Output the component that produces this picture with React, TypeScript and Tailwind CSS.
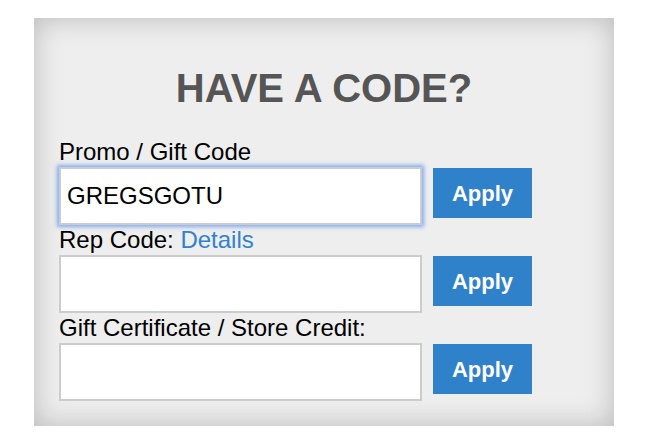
import React from "react"

type Row = {
  label: React.ReactNode
  value: string
  focused?: boolean
}

const rows: Row[] = [
  { label: "Promo / Gift Code", value: "GREGSGOTU", focused: true },
  {
    label: (
      <>
        Rep Code: <a className="text-[#3182ce]">Details</a>
      </>
    ),
    value: "",
  },
  { label: "Gift Certificate / Store Credit:", value: "" },
]

export default function App() {
  return (
    <div className="min-h-[446px] w-[646px] bg-white pt-[18px] pl-[34px] font-['Liberation_Sans',Arial,sans-serif]">
      <div className="w-[580px] bg-[#eeeeee] px-[25px] pt-[50px] pb-[25px] shadow-[inset_0_0_28px_rgba(0,0,0,0.22)]">
        <h2 className="mb-[29px] text-center text-[40px] leading-[40px] font-bold text-[#555555]">
          HAVE A CODE?
        </h2>

        {rows.map((row, i) => (
          <div key={i}>
            <div className="h-[30px] text-[24px] leading-[30px] text-black">{row.label}</div>
            <div className="flex items-start gap-[11px]">
              <input
                readOnly
                value={row.value}
                className={
                  "h-[58px] w-[363px] border-2 border-[#cccccc] bg-white px-[6px] text-[24px] text-black outline-none " +
                  (row.focused ? "shadow-[0_0_4px_2px_rgba(90,150,245,0.75)]" : "")
                }
              />
              <button className="mt-px h-[50px] w-[99px] bg-[#2f82c9] text-[22px] font-bold text-white">
                Apply
              </button>
            </div>
          </div>
        ))}
      </div>
    </div>
  )
}
